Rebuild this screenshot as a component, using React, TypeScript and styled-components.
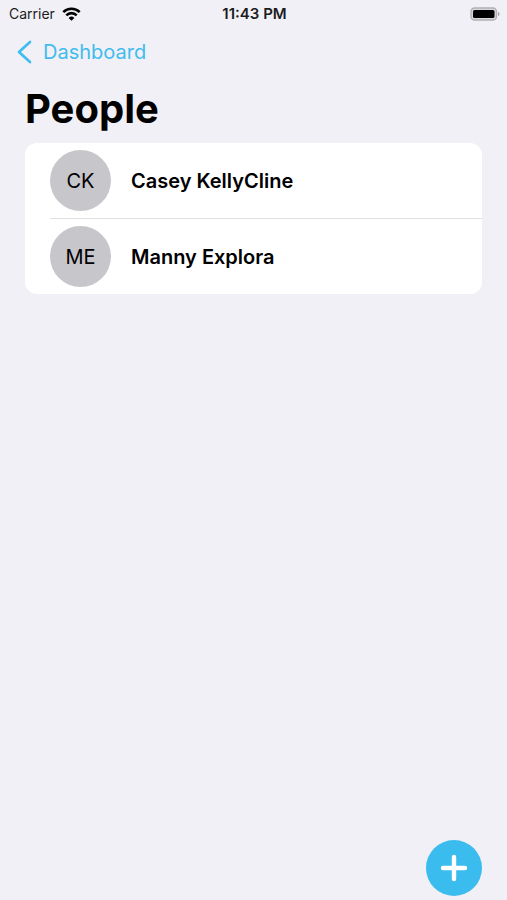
import React from "react";
import styled, { createGlobalStyle } from "styled-components";

const GlobalStyle = createGlobalStyle`
  *, *::before, *::after {
    box-sizing: border-box;
  }
  body {
    margin: 0;
    background: #f1f0f6;
    color: #000;
    font-family: Inter, "Liberation Sans", sans-serif;
  }
`;

const Screen = styled.div`
  display: flex;
  flex-direction: column;
  min-height: 100vh;
`;

const StatusBar = styled.header`
  display: grid;
  grid-template-columns: 1fr auto 1fr;
  align-items: center;
  height: 28px;
  padding: 0 7px 0 9px;
  font-size: 14px;
  line-height: 20px;
  color: #1c1c1e;
`;

const Carrier = styled.div`
  display: flex;
  align-items: center;
  gap: 7px;
`;

const Clock = styled.time`
  font-size: 15px;
  font-weight: 600;
`;

const BatteryIcon = styled.svg`
  justify-self: end;
`;

const NavBar = styled.nav`
  display: flex;
  align-items: center;
  height: 48px;
  padding: 0 16px;
`;

const BackLink = styled.a`
  display: flex;
  align-items: center;
  gap: 11px;
  color: #40bdee;
  font-size: 20px;
  line-height: 28px;
  text-decoration: none;
`;

const Content = styled.main`
  flex: 1;
  padding: 9px 25px 0;
`;

const Title = styled.h1`
  margin: 0 0 10px;
  font-size: 40px;
  line-height: 48px;
  font-weight: 700;
`;

const PeopleList = styled.ul`
  margin: 0;
  padding: 0;
  list-style: none;
  overflow: hidden;
  border-radius: 12px;
  background: #fff;
`;

const PersonRow = styled.li`
  display: flex;
  align-items: center;
  gap: 20px;
  margin-left: 25px;
  padding: 7px 20px 7px 0;

  & + & {
    border-top: 1px solid #e0e0e3;
  }
`;

const Avatar = styled.span`
  display: flex;
  flex: none;
  align-items: center;
  justify-content: center;
  width: 61px;
  height: 61px;
  border-radius: 50%;
  background: #c7c6cb;
  font-size: 20px;
  line-height: 28px;
`;

const PersonName = styled.span`
  font-size: 20px;
  line-height: 28px;
  font-weight: 600;
`;

const Footer = styled.footer`
  display: flex;
  justify-content: flex-end;
  padding: 4px 25px;
`;

const AddButton = styled.button`
  display: flex;
  align-items: center;
  justify-content: center;
  width: 56px;
  height: 56px;
  padding: 0;
  border: 0;
  border-radius: 50%;
  background: #3bbcee;
  color: #fff;
  cursor: pointer;
`;

const people = [
  { initials: "CK", name: "Casey KellyCline" },
  { initials: "ME", name: "Manny Explora" },
];

export default function App() {
  return (
    <Screen>
      <GlobalStyle />
      <StatusBar>
        <Carrier>
          <span>Carrier</span>
          <svg width="19" height="14" viewBox="0 0 19 14" fill="none" stroke="#000" strokeWidth="2.6" aria-hidden="true">
            <path d="M1.3 5.1a11.7 11.7 0 0 1 16.4 0" />
            <path d="M4.3 8.3a7.4 7.4 0 0 1 10.4 0" />
            <path d="M9.5 13.8 6.6 10.9a4.1 4.1 0 0 1 5.8 0z" fill="#000" stroke="none" />
          </svg>
        </Carrier>
        <Clock>11:43 PM</Clock>
        <BatteryIcon width="30" height="14" viewBox="0 0 30 14" role="img" aria-label="Battery full">
          <rect x="1" y="1" width="25.5" height="12" rx="3.6" fill="#d8d8dc" stroke="#b0b0b4" strokeWidth="1.4" />
          <rect x="3" y="3" width="21.5" height="8" rx="1.6" fill="#000" />
          <path d="M28 4.8c2 .8 2 3.6 0 4.4z" fill="#a4a4a8" />
        </BatteryIcon>
      </StatusBar>
      <NavBar>
        <BackLink href="#dashboard">
          <svg width="16" height="24" viewBox="0 0 16 24" fill="none" stroke="currentColor" strokeWidth="2.7" strokeLinecap="round" strokeLinejoin="round" aria-hidden="true">
            <path d="M14 2 3 12l11 10" />
          </svg>
          Dashboard
        </BackLink>
      </NavBar>
      <Content>
        <Title>People</Title>
        <PeopleList>
          {people.map((person) => (
            <PersonRow key={person.name}>
              <Avatar aria-hidden="true">{person.initials}</Avatar>
              <PersonName>{person.name}</PersonName>
            </PersonRow>
          ))}
        </PeopleList>
      </Content>
      <Footer>
        <AddButton type="button" aria-label="Add person">
          <svg width="28" height="28" viewBox="0 0 28 28" fill="none" stroke="currentColor" strokeWidth="4.4" strokeLinecap="round" aria-hidden="true">
            <path d="M14 3v22M3 14h22" />
          </svg>
        </AddButton>
      </Footer>
    </Screen>
  );
}
